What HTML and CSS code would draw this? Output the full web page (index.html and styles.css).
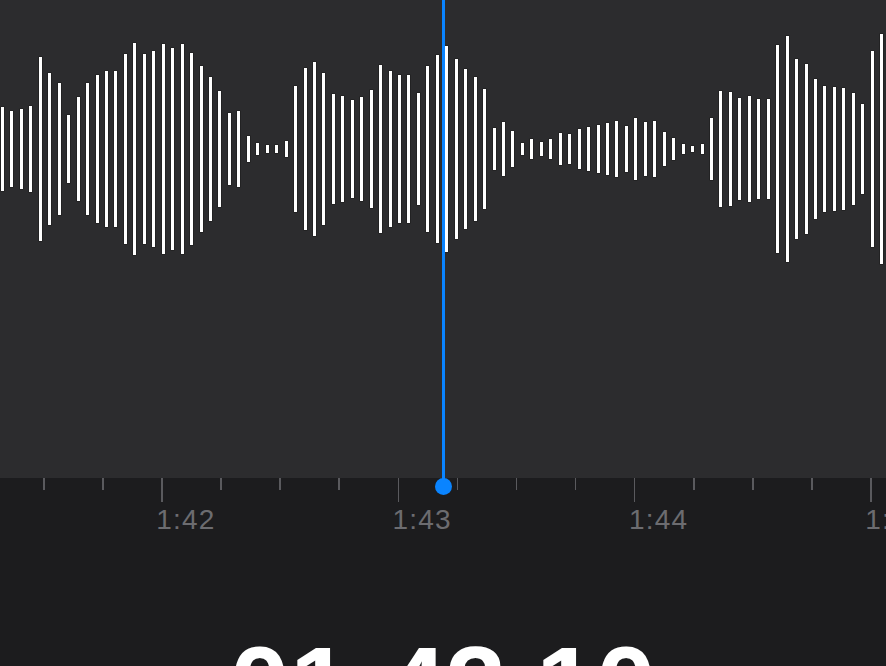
FILE: index.html
```html
<!DOCTYPE html>
<html lang="en">
<head>
  <meta charset="UTF-8" />
  <meta name="viewport" content="width=device-width, initial-scale=1.0"/>
  <title>Voice Memo – Edit</title>
  <link rel="stylesheet" href="styles.css">
</head>
<body>
<div class="editor">
  <div class="wave-area">
    <div class="wave" id="wave"></div>
  </div>

  <div class="ruler" id="ruler"></div>

  <div class="playhead">
    <div class="playhead-line"></div>
    <div class="playhead-dot"></div>
  </div>
</div>

<div class="clock">01:43.10</div>

<script>
  // half heights of each bar, measured from the centre line
  const levels = [
    42, 38, 40, 43, 92, 76, 66, 34, 52, 66, 74, 78, 78, 95, 106, 95, 98, 105, 101, 105,
    96, 83, 72, 58, 36, 38, 13, 6, 4, 4, 8, 63, 81, 87, 76, 55, 53, 49, 52, 59,
    84, 78, 74, 74, 56, 83, 94, 103, 90, 80, 72, 60, 21, 27, 18, 6, 10, 7, 10, 16,
    15, 20, 22, 24, 26, 28, 23, 31, 27, 28, 17, 11, 5, 3, 5, 31, 58, 57, 51, 53,
    50, 50, 104, 113, 90, 85, 70, 63, 62, 61, 56, 45, 98, 115
  ];

  const wave = document.getElementById("wave");
  levels.forEach(function (h) {
    const bar = document.createElement("div");
    bar.className = "bar";
    bar.style.height = (h * 2) + "px";
    wave.appendChild(bar);
  });

  // four ticks per second, label on every full second
  const ruler = document.getElementById("ruler");
  for (let i = 0; i < 15; i++) {
    const cell = document.createElement("div");
    cell.className = "tick-cell";
    const major = (i - 2) % 4 === 0;
    const tick = document.createElement("div");
    tick.className = major ? "tick major" : "tick";
    cell.appendChild(tick);
    if (major) {
      const label = document.createElement("div");
      label.className = "tick-label";
      label.textContent = "1:" + (42 + (i - 2) / 4);
      cell.appendChild(label);
    }
    ruler.appendChild(cell);
  }
</script>
</body>
</html>
```

FILE: styles.css
```css
html, body {
  margin: 0;
  padding: 0;
  overflow: hidden;
}

body {
  background: #1c1c1e;
  font-family: "Liberation Sans", Arial, sans-serif;
  color: #fff;
}

.editor {
  position: relative;
}

.wave-area {
  height: 478px;
  background: #2c2c2e;
  overflow: hidden;
}

.wave {
  height: 298px;
  display: flex;
  align-items: center;
  gap: 6.455px;
  padding-left: 1px;
}

.bar {
  flex: none;
  width: 3px;
  background: #fff;
  box-shadow: 0 0 0 0.5px rgba(0, 0, 0, 0.45);
}

.ruler {
  display: flex;
  padding-left: 43px;
  height: 56px;
  overflow: hidden;
}

.tick-cell {
  flex: none;
  width: 59.1px;
  display: flex;
  flex-direction: column;
}

.tick {
  width: 1.5px;
  height: 12px;
  background: #5a5a5e;
}

.tick.major {
  height: 24px;
}

.tick-label {
  margin-top: 4px;
  margin-left: -5px;
  font-size: 28px;
  line-height: 1;
  letter-spacing: 1.2px;
  color: #6c6c70;
  white-space: nowrap;
}

.playhead {
  position: absolute;
  top: 0;
  left: 434.5px;
  width: 17px;
  display: flex;
  flex-direction: column;
  align-items: center;
}

.playhead-line {
  width: 3px;
  height: 481px;
  background: #0a84ff;
}

.playhead-dot {
  width: 17px;
  height: 17px;
  margin-top: -3px;
  border-radius: 50%;
  background: #0a84ff;
}

.clock {
  margin-top: 97px;
  text-align: center;
  font-size: 108px;
  font-weight: bold;
  line-height: 1;
}
```
